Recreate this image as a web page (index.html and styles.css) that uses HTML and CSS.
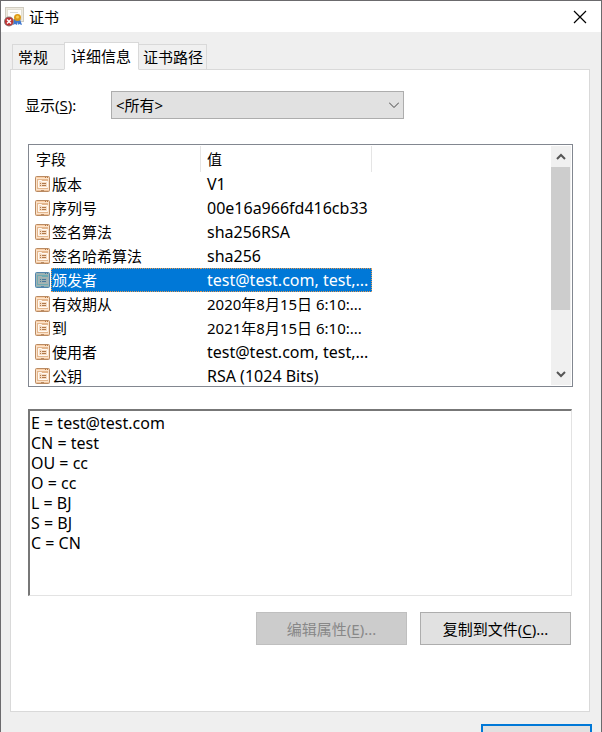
FILE: index.html
```html
<!DOCTYPE html>
<html lang="zh-CN">
<head>
<meta charset="utf-8">
<title>证书</title>
<link rel="stylesheet" href="styles.css">
</head>
<body>
<svg class="defs" aria-hidden="true">
  <symbol id="field" viewBox="0 0 16 16">
    <rect x=".5" y=".5" width="14" height="15" rx="1" fill="#fbe3cb" stroke="#b98a62"/>
    <path d="M1 1.5h13" stroke="#fdd0a6"/>
    <path d="M10 1.5h1M12 1.5h1" stroke="#b07a4c"/>
    <path d="M2 3h11v10H2z" fill="#e3b68d"/>
    <path d="M3.5 11.5v-7h3v1h6v6z" fill="#f5dcc4" stroke="#fffaf4"/>
    <path d="M5 7.500h1M7 7.500h4M5 9.500h1M7 9.500h4" stroke="#b07a4c"/>
    <path d="M1 14.500h13" stroke="#f0c49c"/>
    <path d="M6 14.500h3" stroke="#b98a62"/>
  </symbol>
</svg>
<main class="dialog">
  <header class="titlebar">
    <svg class="app-icon" viewBox="0 0 20 20" aria-hidden="true">
      <rect x="1.500" y=".5" width="18" height="14" fill="#eeeae0" stroke="#d0ccc0"/>
      <rect x="3.500" y="2.500" width="14" height="10" fill="#fdfdfb" stroke="#e3dfd2"/>
      <path d="M6 5.500h8" stroke="#d8d8d4"/>
      <path d="M10 12l-1 6 2-1 2 1 1-6zM13 12l1 6 1-1 3 1-2-6z" fill="#3f78d0"/>
      <circle cx="13.500" cy="10.500" r="3.500" fill="#dc9a18"/>
      <circle cx="13.500" cy="10" r="1.500" fill="#f8cf56"/>
      <circle cx="5" cy="14.500" r="5" fill="#8f7c7c"/>
      <circle cx="5" cy="14.500" r="4" fill="#c02f30"/>
      <path d="M3 12.500l4 4M7 12.500l-4 4" stroke="#fff" stroke-width="1.500"/>
    </svg>
    <h1 class="title">证书</h1>
    <button class="close" type="button" aria-label="关闭">
      <svg viewBox="0 0 12 12" aria-hidden="true"><path d="M0 0l12 12M12 0L0 12"/></svg>
    </button>
  </header>

  <div class="content">
    <div class="tabs" role="tablist">
      <button class="tab" type="button" role="tab" aria-selected="false">常规</button>
      <button class="tab active" type="button" role="tab" aria-selected="true">详细信息</button>
      <button class="tab" type="button" role="tab" aria-selected="false">证书路径</button>
    </div>

    <section class="panel" role="tabpanel">
      <div class="filter">
        <label for="show">显示(<u>S</u>):</label>
        <div class="select-box">
          <select id="show"><option>&lt;所有&gt;</option></select>
          <svg class="chevron" viewBox="0 0 10 6" aria-hidden="true"><path d="M0 .5l5 5 5-5"/></svg>
        </div>
      </div>

      <div class="list">
        <div class="list-view">
          <table>
            <colgroup><col class="col-field"><col class="col-value"><col></colgroup>
            <thead><tr><th scope="col">字段</th><th scope="col">值</th><td></td></tr></thead>
            <tbody>
              <tr><td><div class="cell"><svg class="field-icon"><use href="#field"/></svg><span>版本</span></div></td><td class="latin">V1</td><td></td></tr>
              <tr><td><div class="cell"><svg class="field-icon"><use href="#field"/></svg><span>序列号</span></div></td><td class="latin">00e16a966fd416cb33</td><td></td></tr>
              <tr><td><div class="cell"><svg class="field-icon"><use href="#field"/></svg><span>签名算法</span></div></td><td class="latin">sha256RSA</td><td></td></tr>
              <tr><td><div class="cell"><svg class="field-icon"><use href="#field"/></svg><span>签名哈希算法</span></div></td><td class="latin">sha256</td><td></td></tr>
              <tr class="selected"><td><div class="cell"><svg class="field-icon"><use href="#field"/></svg><span>颁发者</span></div></td><td class="latin">test@test.com, test,...</td><td></td></tr>
              <tr><td><div class="cell"><svg class="field-icon"><use href="#field"/></svg><span>有效期从</span></div></td><td>2020年8月15日 6:10:...</td><td></td></tr>
              <tr><td><div class="cell"><svg class="field-icon"><use href="#field"/></svg><span>到</span></div></td><td>2021年8月15日 6:10:...</td><td></td></tr>
              <tr><td><div class="cell"><svg class="field-icon"><use href="#field"/></svg><span>使用者</span></div></td><td class="latin">test@test.com, test,...</td><td></td></tr>
              <tr><td><div class="cell"><svg class="field-icon"><use href="#field"/></svg><span>公钥</span></div></td><td class="latin">RSA (1024 Bits)</td><td></td></tr>
            </tbody>
          </table>
        </div>
        <div class="scrollbar">
          <button class="arrow" type="button" aria-label="向上滚动"><svg viewBox="0 0 10 7" aria-hidden="true"><path d="M1 6l4-4 4 4"/></svg></button>
          <div class="thumb"></div>
          <button class="arrow" type="button" aria-label="向下滚动"><svg viewBox="0 0 10 7" aria-hidden="true"><path d="M1 1l4 4 4-4"/></svg></button>
        </div>
      </div>

      <textarea class="details" aria-label="字段值" readonly>E = test@test.com
CN = test
OU = cc
O = cc
L = BJ
S = BJ
C = CN</textarea>

      <div class="actions">
        <button class="button" type="button" disabled>编辑属性(<u>E</u>)...</button>
        <button class="button" type="button">复制到文件(<u>C</u>)...</button>
      </div>
    </section>

    <footer class="footer"><button class="button default" type="button" aria-label="确定"></button></footer>
  </div>
</main>
</body>
</html>
```

FILE: styles.css
```css
* { box-sizing: border-box; }

body {
  margin: 0;
  color: #000;
  font: 15px/20px "Noto Sans", "Noto Sans CJK SC", sans-serif;
}

button, select, textarea { font: inherit; color: inherit; border-radius: 0; }

u { text-underline-offset: 2px; }

.defs { display: none; }

.dialog {
  height: 100vh;
  overflow: hidden;
  background: #efefef;
  border: 1px solid #6b6a6d;
  border-bottom: 0;
}

.titlebar {
  display: flex;
  align-items: center;
  height: 31px;
  padding: 0 4px 0 3px;
  background: #fff;
}

.app-icon { width: 20px; height: 20px; }

.title {
  flex: 1;
  margin: 0 0 0 5px;
  font-size: 15px;
  line-height: 20px;
  font-weight: 400;
}

.close {
  display: grid;
  place-items: center;
  width: 34px;
  height: 30px;
  padding: 0;
  border: 0;
  background: none;
}

.close svg { width: 12px; height: 12px; overflow: visible; }
.close path { stroke: #000; stroke-width: 1.2; }

.content { padding: 10px 11px 0 9px; }

.tabs {
  display: flex;
  align-items: flex-end;
  position: relative;
  padding-left: 2px;
  margin-bottom: -1px;
}

.tab {
  height: 26px;
  padding: 0 3px 0 4px;
  border: 1px solid #d9d9d9;
  background: #f0f0f0;
  text-align: left;
  white-space: nowrap;
}

.tab:first-child { width: 52px; padding-left: 5px; border-right: 0; }
.tab:last-child { border-left: 0; }

.tab.active {
  height: 28px;
  padding: 0 7px 0 6px;
  background: #fff;
  border-bottom-color: #fff;
}

.panel {
  padding: 21px 17px 66px;
  background: #fff;
  border: 1px solid #d9d9d9;
}

.filter { display: flex; align-items: center; margin-left: -3px; }
.filter label { width: 86px; }

.select-box { position: relative; width: 293px; }

.select-box select {
  display: block;
  width: 100%;
  height: 28px;
  padding: 0 24px 0 4px;
  appearance: none;
  border: 1px solid #adadad;
  background: #e1e1e1;
}

.chevron {
  position: absolute;
  top: 11px;
  right: 5px;
  width: 10px;
  height: 6px;
  fill: none;
  stroke: #444;
}

.list {
  display: flex;
  height: 243px;
  margin-top: 25px;
  margin-right: -1px;
  padding: 1px 1px 1px 0;
  border: 1px solid #828790;
}

.list-view { flex: 1; min-width: 0; overflow: hidden; }

table { width: 100%; table-layout: fixed; border-collapse: separate; border-spacing: 0; }
.col-field { width: 172px; }
.col-value { width: 171px; }

th, td { padding: 0 0 0 6px; white-space: nowrap; text-align: left; font-weight: 400; }
thead th { height: 26px; border-right: 1px solid #e5e5e5; }
thead th:first-child { padding-left: 7px; }
tbody td { height: 24px; }

.latin { font-size: 16px; }

.cell { display: flex; align-items: center; height: 24px; }
.cell span { flex: 1; line-height: 24px; padding-left: 1px; }
.field-icon { width: 16px; height: 16px; }

.selected .cell span,
.selected .latin {
  color: #fff;
  background: #0078d7;
  border: 1px dotted #e39a52;
}
.selected .latin { border-left: 0; }
.selected .cell span { line-height: 22px; border-right: 0; padding-left: 0; }
.selected .field-icon { filter: sepia(1) hue-rotate(165deg) saturate(2) brightness(.7); }

.scrollbar {
  display: flex;
  flex-direction: column;
  width: 20px;
  padding-right: 1px;
  background: #f0f0f0;
}

.arrow {
  display: grid;
  place-items: center;
  height: 21px;
  padding: 0;
  border: 0;
  background: none;
}
.arrow:last-child { margin-top: auto; }
.arrow svg { width: 10px; height: 7px; }
.arrow path { fill: none; stroke: #555; stroke-width: 2; }
.thumb { height: 143px; background: #cdcdcd; }

.details {
  display: block;
  width: 100%;
  height: 187px;
  margin-top: 22px;
  padding: 2px 1px;
  resize: none;
  outline: 0;
  font-size: 16px;
  border: 1px solid #e3e3e3;
  border-top: 2px solid #777;
  border-left: 2px solid #777;
}

.actions {
  display: flex;
  justify-content: flex-end;
  gap: 13px;
  margin: 16px 1px 0 0;
}

.button {
  width: 151px;
  height: 33px;
  padding: 0;
  border: 1px solid #adadad;
  background: #e1e1e1;
}

.button:disabled { color: #888; background: #ccc; border-color: #bfbfbf; }

.footer { display: flex; justify-content: flex-end; margin: 12px -2px 0 0; }
.button.default { width: 111px; border: 2px solid #0078d7; }
```
